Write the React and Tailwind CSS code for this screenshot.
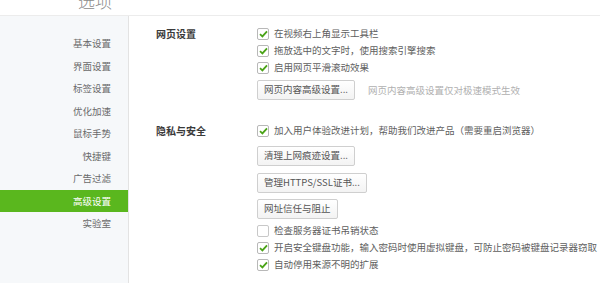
import React from 'react'

const NAV = ['基本设置', '界面设置', '标签设置', '优化加速', '鼠标手势', '快捷键', '广告过滤', '高级设置', '实验室']
const FONT = { fontFamily: '"Microsoft YaHei", "Noto Sans CJK SC", sans-serif' }

function Check({ on, label }) {
  return (
    <div className="flex items-center h-[17px] whitespace-nowrap">
      <span className={`w-[12px] h-[12px] shrink-0 rounded-[2px] border flex items-center justify-center bg-white ${on ? 'border-[#b8b8b8]' : 'border-[#c8c8c8]'}`}>
        {on && (
          <svg width="9" height="8" viewBox="0 0 9 8">
            <path d="M1 4.2 L3.4 6.4 L8 1.4" fill="none" stroke="#4aa317" strokeWidth="1.8" />
          </svg>
        )}
      </span>
      <span className="ml-[5px] text-[9.5px] text-[#5e5e5e]">{label}</span>
    </div>
  )
}

function Btn({ children, className = '' }) {
  return (
    <button className={`block h-[20px] px-[6px] border border-[#cfcfcf] rounded-[2px] bg-gradient-to-b from-white to-[#f3f3f3] text-[9.5px] text-[#555] leading-none whitespace-nowrap ${className}`}>
      {children}
    </button>
  )
}

export default function App() {
  return (
    <div className="w-[600px] h-[283px] overflow-hidden bg-white flex flex-col" style={FONT}>
      {/* Header */}
      <header className="h-[16px] shrink-0 border-b border-[#ececec] relative overflow-hidden">
        <div className="absolute left-[78px] top-[-12px] text-[17px] font-light text-[#8a8a8a]" style={{ fontFamily: '"Noto Sans CJK SC", sans-serif' }}>选项</div>
      </header>

      <div className="flex flex-1">
        {/* Sidebar */}
        <nav className="w-[129px] shrink-0 bg-[#f6f8fa] border-r border-[#e3e3e3] pt-[16px]">
          {NAV.map(n => (
            <div
              key={n}
              className={`h-[22.5px] flex items-center justify-end pr-[17px] text-[9.5px] ${
                n === '高级设置' ? 'bg-[#5ab71e] text-white' : 'text-[#6a6a6a]'
              }`}
            >
              {n}
            </div>
          ))}
        </nav>

        {/* Content */}
        <main className="flex-1 pl-[27px] pt-[9px]">
          <section className="flex">
            <div className="w-[101px] text-[10px] font-bold text-[#3a3a3a] pt-[1px]">网页设置</div>
            <div className="flex flex-col">
              <Check on label="在视频右上角显示工具栏" />
              <Check on label="拖放选中的文字时，使用搜索引擎搜索" />
              <Check on label="启用网页平滑滚动效果" />
              <div className="flex items-center mt-[4px]">
                <Btn>网页内容高级设置...</Btn>
                <span className="ml-[13px] text-[9.5px] text-[#b0b0b0] whitespace-nowrap">网页内容高级设置仅对极速模式生效</span>
              </div>
            </div>
          </section>

          <section className="flex mt-[22px]">
            <div className="w-[101px] text-[10px] font-bold text-[#3a3a3a] pt-[1px]">隐私与安全</div>
            <div className="flex flex-col items-start">
              <Check on label="加入用户体验改进计划，帮助我们改进产品（需要重启浏览器）" />
              <Btn className="mt-[7px]">清理上网痕迹设置...</Btn>
              <Btn className="mt-[7px]">管理HTTPS/SSL证书...</Btn>
              <Btn className="mt-[6px]">网址信任与阻止</Btn>
              <div className="mt-[3px]">
                <Check label="检查服务器证书吊销状态" />
                <Check on label="开启安全键盘功能，输入密码时使用虚拟键盘，可防止密码被键盘记录器窃取" />
                <Check on label="自动停用来源不明的扩展" />
              </div>
            </div>
          </section>
        </main>
      </div>
    </div>
  )
}
